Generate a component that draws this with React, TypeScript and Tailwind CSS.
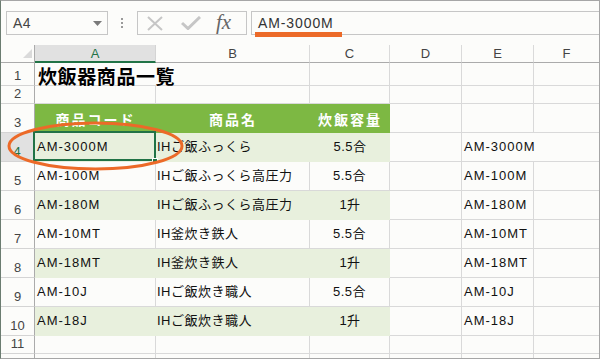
import React from "react";

type Item = {
  code: string;
  name: string;
  cap: string;
};

const items: Item[] = [
  { code: "AM-3000M", name: "IHご飯ふっくら", cap: "5.5合" },
  { code: "AM-100M", name: "IHご飯ふっくら高圧力", cap: "5.5合" },
  { code: "AM-180M", name: "IHご飯ふっくら高圧力", cap: "1升" },
  { code: "AM-10MT", name: "IH釜炊き鉄人", cap: "5.5合" },
  { code: "AM-18MT", name: "IH釜炊き鉄人", cap: "1升" },
  { code: "AM-10J", name: "IHご飯炊き職人", cap: "5.5合" },
  { code: "AM-18J", name: "IHご飯炊き職人", cap: "1升" },
];

const cellFont = "font-['Liberation_Sans','Noto_Sans_CJK_JP',sans-serif]";

function RowHead({ n, active }: { n: number | string; active?: boolean }) {
  return (
    <div
      className={
        "w-[34px] shrink-0 flex items-end justify-center pb-[1px] text-[13px] leading-none border-b " +
        (active
          ? "bg-[#e1e1e1] text-[#217346] border-b-[#d4d4d4] border-r-2 border-r-[#217346]"
          : "text-[#444] border-b-[#d4d4d4] border-r border-r-[#ababab]")
      }
    >
      <span className="pb-[2px]">{n}</span>
    </div>
  );
}

function Blank({ w, noRight }: { w: string; noRight?: boolean }) {
  return (
    <div
      className={
        w +
        " shrink-0 border-b border-[#d9d9d9] " +
        (noRight ? "" : "border-r")
      }
    />
  );
}

export default function App() {
  return (
    <div className="relative w-[600px] h-[359px] overflow-hidden bg-[#fcfcfa] border-t border-r border-b border-[#a6a6a6] border-l border-l-[#6b7c70] flex flex-col font-['Liberation_Sans',sans-serif]">
      {/* formula bar */}
      <div className="h-[44px] shrink-0 flex items-start pt-[10px] pl-[5px]">
        <div className="w-[102px] h-[24px] border border-[#c6c6c6] flex items-center justify-between pl-[6px] pr-[5px]">
          <span className="text-[14px] text-[#444] tracking-[0.5px]">A4</span>
          <svg width="9" height="5" viewBox="0 0 9 5">
            <polygon points="0,0 9,0 4.5,5" fill="#7a7a7a" />
          </svg>
        </div>
        <div className="ml-[13px] mt-[7px] flex flex-col gap-[2px]">
          <span className="w-[2px] h-[2px] bg-[#9a9a9a]" />
          <span className="w-[2px] h-[2px] bg-[#9a9a9a]" />
          <span className="w-[2px] h-[2px] bg-[#9a9a9a]" />
        </div>
        <div className="ml-[14px] w-[110px] h-[24px] border border-[#c6c6c6] flex items-center">
          <svg className="ml-[8px]" width="18" height="15" viewBox="0 0 18 15">
            <path d="M2 1 L16 14 M16 1 L2 14" stroke="#c6c6c6" strokeWidth="2" fill="none" />
          </svg>
          <svg className="ml-[17px]" width="20" height="14" viewBox="0 0 20 14">
            <path d="M1 7 L7 12.5 L19 1" stroke="#c6c6c6" strokeWidth="3" fill="none" />
          </svg>
          <span className="ml-[15px] text-[21px] leading-none italic text-[#666] font-['Liberation_Serif',serif] -mt-[2px]">
            fx
          </span>
        </div>
        <div className="relative ml-[4px] flex-1 h-[24px] border-y border-l border-[#c6c6c6] flex items-center pl-[6px]">
          <span className="text-[14px] text-[#333] tracking-[0.9px]">AM-3000M</span>
          <div className="absolute left-[3px] top-[20px] w-[87px] h-[5px] bg-[#ec6a28]" />
        </div>
      </div>

      {/* column headers */}
      <div className="h-[18px] shrink-0 flex text-[13px] text-[#444] leading-none">
        <div className="w-[34px] shrink-0 border-b border-r border-[#ababab] flex items-end justify-end pr-[2px] pb-[4px]">
          <svg width="9" height="9" viewBox="0 0 9 9">
            <polygon points="9,0 9,9 0,9" fill="#dadada" />
          </svg>
        </div>
        <div className="w-[121px] shrink-0 bg-[#e1e1e1] border-b-2 border-[#217346] border-r border-r-[#d4d4d4] flex items-center justify-center text-[#217346]">
          A
        </div>
        {[
          ["B", "w-[154px]"],
          ["C", "w-[80px]"],
          ["D", "w-[72px]"],
          ["E", "w-[72px]"],
        ].map(([l, w]) => (
          <div
            key={l}
            className={w + " shrink-0 border-b border-b-[#ababab] border-r border-r-[#dadada] flex items-center justify-center"}
          >
            {l}
          </div>
        ))}
        <div className="flex-1 border-b border-[#ababab] flex items-center justify-center">F</div>
      </div>

      {/* row 1 */}
      <div className="h-[23px] shrink-0 flex">
        <RowHead n={1} />
        <div className="w-[121px] shrink-0 border-b border-[#d9d9d9] relative">
          <span className="absolute left-[3px] bottom-[-3px] whitespace-nowrap text-[19px] font-bold tracking-[0.6px] text-black font-['Noto_Sans_CJK_JP',sans-serif] leading-[24px]">
            炊飯器商品一覧
          </span>
        </div>
        <Blank w="w-[154px]" />
        <Blank w="w-[80px]" />
        <Blank w="w-[72px]" />
        <Blank w="w-[72px]" />
        <Blank w="flex-1" noRight />
      </div>

      {/* row 2 */}
      <div className="h-[18px] shrink-0 flex">
        <RowHead n={2} />
        <Blank w="w-[121px]" />
        <Blank w="w-[154px]" />
        <Blank w="w-[80px]" />
        <Blank w="w-[72px]" />
        <Blank w="w-[72px]" />
        <Blank w="flex-1" noRight />
      </div>

      {/* row 3: table header */}
      <div className="h-[29px] shrink-0 flex">
        <RowHead n={3} />
        <div className="w-[355px] shrink-0 flex bg-[#7db843] text-white font-bold text-[14px] tracking-[2px] font-['Noto_Sans_CJK_JP',sans-serif] border-b border-[#7db843]">
          <div className="w-[121px] flex items-center justify-center pt-[3px]">商品コード</div>
          <div className="w-[154px] flex items-center justify-center pt-[3px]">商品名</div>
          <div className="w-[80px] flex items-center justify-center pt-[3px]">炊飯容量</div>
        </div>
        <Blank w="w-[72px]" />
        <Blank w="w-[72px]" />
        <Blank w="flex-1" noRight />
      </div>

      {/* data rows */}
      {items.map((it, i) => {
        const striped = i % 2 === 0;
        const cell = striped
          ? "bg-[#e8f0dd] border-b border-[#e8f0dd]"
          : "border-b border-r border-[#d9d9d9]";
        return (
          <div key={it.code} className={"h-[29px] shrink-0 flex text-[13px] text-[#111] " + cellFont}>
            <RowHead n={i + 4} active={i === 0} />
            <div className={"shrink-0 relative flex items-center pl-[2px] tracking-[1px] " + cell + (i === 0 ? " -ml-[1px] w-[122px] pl-[3px]" : " w-[121px]")}>
              {it.code}
              {i === 0 && (
                <>
                  <div className="absolute left-[-1px] top-[-2px] w-[123px] h-[30px] border-2 border-[#217346]" />
                  <div className="absolute left-[118px] top-[25px] w-[6px] h-[6px] bg-[#217346] border border-white" />
                </>
              )}
            </div>
            <div className={"w-[154px] shrink-0 flex items-center pl-[1px] tracking-[0.5px] whitespace-nowrap " + cell}>
              {it.name}
            </div>
            <div className={"w-[80px] shrink-0 flex items-center justify-center tracking-[0.5px] " + cell}>
              {it.cap}
            </div>
            <Blank w="w-[72px]" />
            <div className={"w-[72px] shrink-0 flex items-center pl-[2px] tracking-[1px] whitespace-nowrap border-b border-[#d9d9d9] " + (i === 0 ? "" : "border-r")}>
              {it.code}
            </div>
            <Blank w="flex-1" noRight />
          </div>
        );
      })}

      {/* row 11 */}
      <div className="h-[18px] shrink-0 flex">
        <RowHead n={11} />
        <Blank w="w-[121px]" />
        <Blank w="w-[154px]" />
        <Blank w="w-[80px]" />
        <Blank w="w-[72px]" />
        <Blank w="w-[72px]" />
        <Blank w="flex-1" noRight />
      </div>

      {/* row 12 (partial) */}
      <div className="flex-1 flex">
        <div className="w-[34px] shrink-0 border-r border-[#ababab]" />
        <div className="w-[121px] shrink-0 border-r border-[#d9d9d9]" />
        <div className="w-[154px] shrink-0 border-r border-[#d9d9d9]" />
        <div className="w-[80px] shrink-0 border-r border-[#d9d9d9]" />
        <div className="w-[72px] shrink-0 border-r border-[#d9d9d9]" />
        <div className="w-[72px] shrink-0 border-r border-[#d9d9d9]" />
        <div className="flex-1" />
      </div>

      {/* annotation ellipse */}
      <svg
        className="absolute left-[6px] top-[120px] pointer-events-none"
        width="177"
        height="50"
        viewBox="0 0 177 50"
      >
        <ellipse cx="88.5" cy="25" rx="86.5" ry="23" fill="none" stroke="#ec6a28" strokeWidth="3" />
      </svg>
    </div>
  );
}
